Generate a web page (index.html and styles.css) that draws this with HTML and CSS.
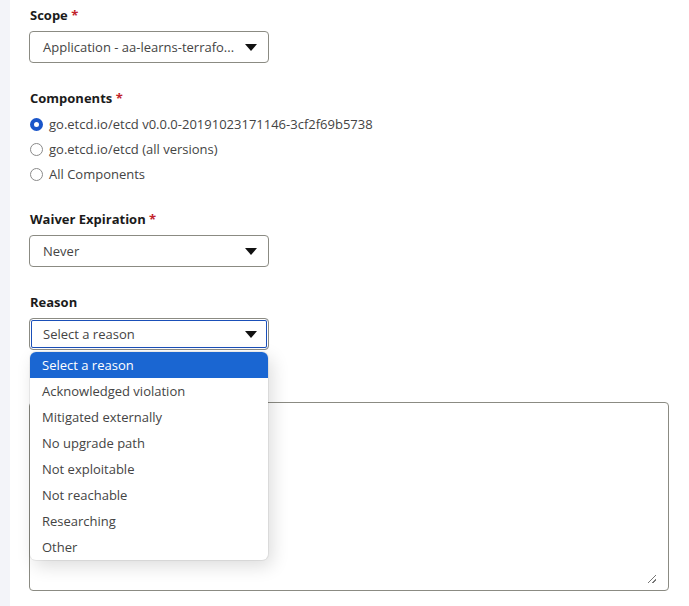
FILE: index.html
```html
<!DOCTYPE html>
<html>
<head>
<meta charset="utf-8">
<link rel="stylesheet" href="styles.css">
</head>
<body>
<div class="page">
  <div class="rail"></div>
  <main class="form">
    <div class="field">
      <div class="label">Scope <span class="req">*</span></div>
      <div class="select"><span class="value">Application - aa-learns-terrafo...</span><span class="arrow"></span></div>
    </div>

    <div class="field">
      <div class="label">Components <span class="req">*</span></div>
      <div class="radios">
        <div class="radio-row"><span class="radio checked"></span><span>go.etcd.io/etcd v0.0.0-20191023171146-3cf2f69b5738</span></div>
        <div class="radio-row"><span class="radio"></span><span>go.etcd.io/etcd (all versions)</span></div>
        <div class="radio-row"><span class="radio"></span><span>All Components</span></div>
      </div>
    </div>

    <div class="field">
      <div class="label">Waiver Expiration <span class="req">*</span></div>
      <div class="select"><span class="value">Never</span><span class="arrow"></span></div>
    </div>

    <div class="field reason-field">
      <div class="label">Reason</div>
      <div class="select focused"><span class="value">Select a reason</span><span class="arrow"></span></div>
      <ul class="menu">
        <li class="opt active">Select a reason</li>
        <li class="opt">Acknowledged violation</li>
        <li class="opt">Mitigated externally</li>
        <li class="opt">No upgrade path</li>
        <li class="opt">Not exploitable</li>
        <li class="opt">Not reachable</li>
        <li class="opt">Researching</li>
        <li class="opt">Other</li>
      </ul>
    </div>

    <div class="field comment-field">
      <div class="textarea"><span class="grip"></span></div>
    </div>
  </main>
</div>
</body>
</html>
```

FILE: styles.css
```css
html, body {
  margin: 0;
  padding: 0;
  background: #ffffff;
  font-family: "Open Sans", "Noto Sans", sans-serif;
  color: #3f3f3f;
}

.page {
  display: flex;
  min-height: 606px;
}

.rail {
  width: 10px;
  flex: none;
  background: #f3f4f9;
}

.form {
  flex: 1;
  padding: 5px 21px 0 19px;
}

.field {
  margin-bottom: 25px;
}

.label {
  font-size: 13px;
  font-weight: 700;
  color: #1b1b1b;
  line-height: 20px;
  padding-left: 1px;
  margin-bottom: 6px;
}

.req {
  color: #c2232b;
}

.select {
  box-sizing: border-box;
  width: 240px;
  height: 32px;
  border: 1px solid #8b8b83;
  border-radius: 4px;
  display: flex;
  align-items: center;
  justify-content: space-between;
  padding: 0 11px 0 13px;
  font-size: 13px;
  color: #444444;
}

.select.focused {
  box-shadow: inset 0 0 0 1px #ffffff, inset 0 0 0 2px #1a4fb8;
}

.arrow {
  width: 0;
  height: 0;
  border-left: 6px solid transparent;
  border-right: 6px solid transparent;
  border-top: 7px solid #111111;
  margin-top: 1px;
}

.radios {
  display: flex;
  flex-direction: column;
  gap: 5px;
  margin-top: 0;
}

.radio-row {
  display: flex;
  align-items: center;
  gap: 6px;
  font-size: 13px;
  line-height: 20px;
  color: #444444;
}

.radio {
  box-sizing: border-box;
  width: 13px;
  height: 13px;
  border-radius: 50%;
  border: 1px solid #8a8a8a;
  margin-left: 1px;
}

.radio.checked {
  border: 4px solid #1a55c9;
}

.reason-field {
  position: relative;
}

.menu {
  position: absolute;
  left: 1px;
  top: 60px;
  width: 238px;
  margin: 0;
  padding: 0;
  list-style: none;
  background: #ffffff;
  border-radius: 6px;
  overflow: hidden;
  box-shadow: 0 0 0 1px rgba(0,0,0,0.06), 4px 6px 18px rgba(0,0,0,0.14);
  z-index: 2;
}

.opt {
  height: 26px;
  line-height: 26px;
  padding-left: 12px;
  font-size: 13px;
  color: #444444;
}

.opt.active {
  background: #1a66d2;
  color: #ffffff;
}

.comment-field {
  padding-top: 27px;
}

.textarea {
  position: relative;
  box-sizing: border-box;
  width: 640px;
  height: 189px;
  border: 1px solid #8b8b83;
  border-radius: 4px;
}

.grip {
  position: absolute;
  right: 12px;
  bottom: 7px;
  width: 8px;
  height: 8px;
  background:
    linear-gradient(135deg, transparent 45%, #777 45%, #777 55%, transparent 55%),
    linear-gradient(135deg, transparent 75%, #777 75%, #777 85%, transparent 85%);
}
```
